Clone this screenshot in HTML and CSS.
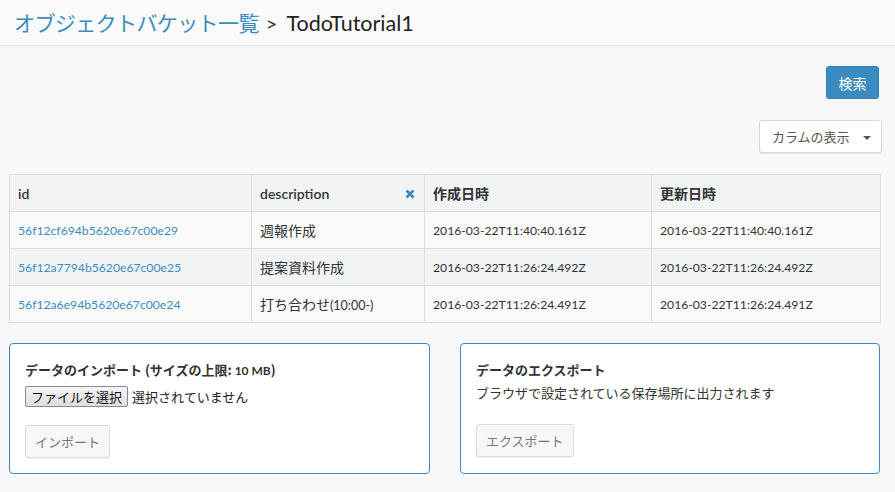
FILE: index.html
```html
<!DOCTYPE html>
<html lang="ja">
<head>
<meta charset="utf-8">
<title>TodoTutorial1</title>
<link rel="stylesheet" href="styles.css">
</head>
<body>
<header class="topbar">
  <h1 class="title"><a class="crumb" href="#">オブジェクトバケット一覧</a><span class="sep">&gt;</span><span class="bucket">TodoTutorial1</span></h1>
</header>
<main class="content">
  <div class="toolbar">
    <button class="btn btn-primary">検索</button>
  </div>
  <div class="toolbar toolbar-cols">
    <button class="btn btn-default">カラムの表示 <span class="caret"></span></button>
  </div>
  <table class="grid">
    <colgroup>
      <col class="c-id"><col class="c-desc"><col class="c-created"><col class="c-updated">
    </colgroup>
    <thead>
      <tr>
        <th>id</th>
        <th class="th-desc"><span>description</span><svg class="xicon" viewBox="0 0 10 10" width="10" height="10"><path d="M1.5 1.5 L8.5 8.5 M8.5 1.5 L1.5 8.5" stroke="#3a8cc0" stroke-width="2.6" stroke-linecap="butt"/></svg></th>
        <th class="jp">作成日時</th>
        <th class="jp">更新日時</th>
      </tr>
    </thead>
    <tbody>
      <tr>
        <td><a href="#">56f12cf694b5620e67c00e29</a></td>
        <td class="desc">週報作成</td>
        <td>2016-03-22T11:40:40.161Z</td>
        <td>2016-03-22T11:40:40.161Z</td>
      </tr>
      <tr>
        <td><a href="#">56f12a7794b5620e67c00e25</a></td>
        <td class="desc">提案資料作成</td>
        <td>2016-03-22T11:26:24.492Z</td>
        <td>2016-03-22T11:26:24.492Z</td>
      </tr>
      <tr>
        <td><a href="#">56f12a6e94b5620e67c00e24</a></td>
        <td class="desc">打ち合わせ<span class="small">(10:00-)</span></td>
        <td>2016-03-22T11:26:24.491Z</td>
        <td>2016-03-22T11:26:24.491Z</td>
      </tr>
    </tbody>
  </table>
  <div class="panels">
    <section class="panel">
      <h2 class="panel-title">データのインポート <span class="limit">(サイズの上限: <span class="num">10 MB</span>)</span></h2>
      <div class="file-row"><span class="file-btn">ファイルを選択</span><span class="file-name">選択されていません</span></div>
      <button class="btn btn-light">インポート</button>
    </section>
    <section class="panel">
      <h2 class="panel-title">データのエクスポート</h2>
      <p class="panel-text">ブラウザで設定されている保存場所に出力されます</p>
      <button class="btn btn-light">エクスポート</button>
    </section>
  </div>
</main>
</body>
</html>
```

FILE: styles.css
```css
html, body {
  margin: 0;
  padding: 0;
}
body {
  background: #f8f8f8;
  font-family: "Source Sans Pro", Lato, "Noto Sans CJK JP", sans-serif;
  color: #333;
  font-size: 13px;
}
.topbar {
  height: 46px;
  background: #fafafa;
  border-bottom: 1px solid #e6e6e6;
  box-shadow: 0 1px 2px rgba(0,0,0,0.04);
  box-sizing: border-box;
  padding-left: 14px;
}
.title {
  margin: 0;
  font-weight: normal;
  font-size: 21.5px;
  line-height: 45px;
  font-family: "Source Sans Pro", Lato, "Noto Sans CJK JP", sans-serif;
}
.crumb {
  color: #3a8cc0;
  text-decoration: none;
  font-family: "Noto Sans CJK JP", sans-serif;
  font-size: 21px;
  letter-spacing: -0.6px;
}
.sep {
  color: #333;
  margin: 0 9px 0 7px;
  font-size: 20px;
}
.bucket {
  color: #222;
}
.content {
  padding: 20px 15px 18px 9px;
}
.toolbar {
  display: flex;
  justify-content: flex-end;
  padding-right: 1px;
}
.toolbar-cols {
  margin-top: 21px;
  margin-right: -3px;
}
.btn {
  font-family: "Noto Sans CJK JP", sans-serif;
  font-size: 14px;
  height: 33px;
  border-radius: 3px;
  padding: 0 12px;
  box-sizing: border-box;
  cursor: pointer;
}
.btn-primary {
  background: #3a8cc0;
  border: 1px solid #337fb0;
  color: #fff;
  width: 53px;
  padding: 0;
}
.btn-default {
  background: #fff;
  border: 1px solid #d8d8d8;
  box-shadow: 0 1px 1px rgba(0,0,0,0.08);
  color: #555;
  width: 123px;
  font-size: 13px;
  padding: 0 10px 0 12px;
  display: flex;
  align-items: center;
  justify-content: space-between;
}
.caret {
  width: 0;
  height: 0;
  border-left: 4px solid transparent;
  border-right: 4px solid transparent;
  border-top: 4px solid #555;
  margin-top: 2px;
}
.grid {
  margin-top: 21px;
  width: 871px;
  border-collapse: collapse;
  table-layout: fixed;
  border: 1px solid #dcdcdc;
}
.c-id { width: 242px; }
.c-desc { width: 173px; }
.c-created { width: 227px; }
.c-updated { width: 229px; }
.grid th, .grid td {
  border: 1px solid #dcdcdc;
  height: 37px;
  box-sizing: border-box;
  padding: 0 8px;
  text-align: left;
  vertical-align: middle;
  white-space: nowrap;
}
.grid th {
  background: #f2f3f5;
  font-size: 14px;
  font-weight: 600;
  color: #333;
}
.grid th.jp {
  font-family: "Noto Sans CJK JP", sans-serif;
  font-weight: bold;
  font-size: 14px;
}
.th-desc {
  position: relative;
}
.xicon {
  position: absolute;
  right: 9px;
  top: 14px;
}
.grid tbody tr:nth-child(odd) td {
  background: #fafafa;
}
.grid tbody tr:nth-child(even) td {
  background: #f2f3f5;
}
.grid td {
  font-size: 12.2px;
  color: #333;
}
.grid td a {
  color: #3a8cc0;
  text-decoration: none;
}
.grid td.desc {
  font-family: "Noto Sans CJK JP", sans-serif;
  font-size: 14px;
}
.small {
  font-family: "Source Sans Pro", Lato, sans-serif;
  font-size: 12.5px;
}
.panels {
  display: flex;
  justify-content: space-between;
  margin-top: 20px;
}
.panel {
  width: 421px;
  height: 131px;
  box-sizing: border-box;
  background: #fff;
  border: 1px solid #3f87cc;
  border-radius: 4px;
  padding: 17px 15px 0 15px;
}
.panel:last-child {
  width: 420px;
}
.panel-title {
  margin: 0;
  font-family: "Noto Sans CJK JP", sans-serif;
  font-size: 13px;
  font-weight: bold;
  line-height: 18px;
  color: #333;
}
.limit {
  font-weight: bold;
}
.num {
  font-family: "Source Sans Pro", Lato, sans-serif;
  font-size: 12px;
}
.file-row {
  display: flex;
  align-items: center;
  margin-top: 5px;
  height: 22px;
}
.file-btn {
  font-family: "Noto Sans CJK JP", sans-serif;
  font-size: 13px;
  background: linear-gradient(#f4f4f4, #dedede);
  border: 1px solid #8a8a8a;
  border-radius: 2px;
  padding: 0 5px;
  height: 21px;
  line-height: 19px;
  box-sizing: border-box;
  color: #111;
}
.file-name {
  font-family: "Noto Sans CJK JP", sans-serif;
  font-size: 13px;
  margin-left: 4px;
  color: #222;
}
.panel-text {
  margin: 4px 0 0;
  font-family: "Noto Sans CJK JP", sans-serif;
  font-size: 13px;
  line-height: 20px;
  height: 23px;
  color: #333;
}
.btn-light {
  margin-top: 18px;
  background: #f7f7f7;
  border: 1px solid #dcdcdc;
  box-shadow: 0 1px 1px rgba(0,0,0,0.06);
  color: #777;
  font-size: 13px;
  padding: 0 9px;
}
```
